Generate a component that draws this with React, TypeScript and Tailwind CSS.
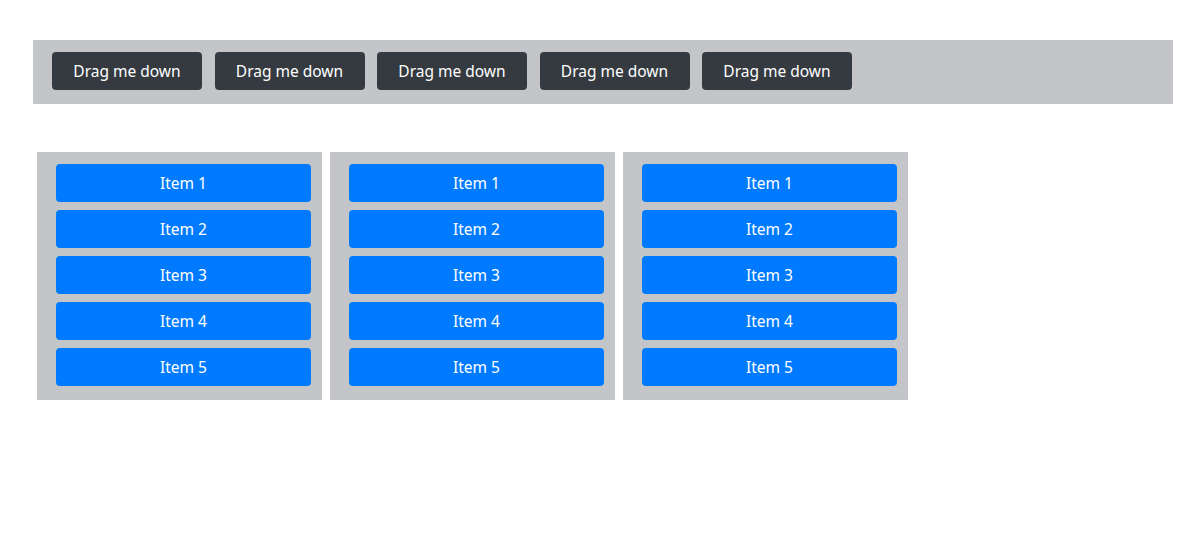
import React from 'react';

const font = { fontFamily: '"Segoe UI", "Noto Sans", "Liberation Sans", sans-serif' };

const buttons = [1, 2, 3, 4, 5];
const columns = [1, 2, 3];
const items = ['Item 1', 'Item 2', 'Item 3', 'Item 4', 'Item 5'];

export default function App() {
  return (
    <div className="min-h-[555px] bg-white pt-[40px]" style={font}>
      {/* Draggable source bar */}
      <div className="ml-[33px] flex h-[64px] w-[1140px] items-start gap-[12.5px] bg-[#c3c5c8] pl-[19px] pt-[12px]">
        {buttons.map(b => (
          <button
            key={b}
            className="flex h-[38px] w-[150px] items-center justify-center rounded-[4px] bg-[#343a40] pt-[2px] text-[15.5px] text-white"
          >
            Drag me down
          </button>
        ))}
      </div>

      {/* Drop columns */}
      <div className="ml-[37px] mt-[48px] flex gap-[8px]">
        {columns.map(c => (
          <div key={c} className="flex w-[285px] flex-col gap-[8px] bg-[#c3c5c8] pb-[14px] pl-[19px] pr-[11px] pt-[12px]">
            {items.map(item => (
              <div
                key={item}
                className="flex h-[38px] items-center justify-center rounded-[4px] bg-[#007bff] pt-[2px] text-[15.5px] text-white"
              >
                {item}
              </div>
            ))}
          </div>
        ))}
      </div>
    </div>
  );
}
